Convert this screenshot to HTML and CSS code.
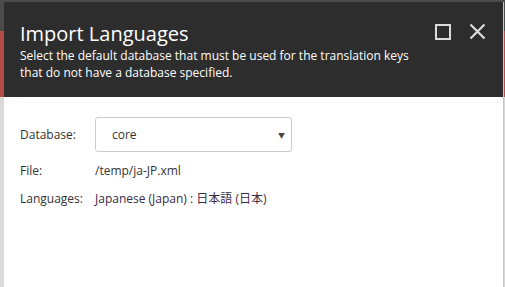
FILE: index.html
```html
<!DOCTYPE html>
<html lang="en">

<head>
    <meta charset="UTF-8">
    <meta name="viewport" content="width=device-width, initial-scale=1.0">
    <title>Import Languages</title>
    <link rel="stylesheet" href="styles.css">
</head>

<body>
    <div class="backdrop">
        <div class="topbar"></div>
        <div class="band"></div>
        <div class="rest"></div>
    </div>

    <div class="dialog">
        <div class="dialog-header">
            <div class="title-row">
                <h1 class="dialog-title">Import Languages</h1>
                <div class="dialog-buttons">
                    <svg class="icon" width="16" height="16" viewBox="0 0 16 16">
                        <rect x="1" y="1" width="14" height="14" fill="none" stroke="#dcdcdc" stroke-width="2" />
                    </svg>
                    <svg class="icon" width="17" height="17" viewBox="0 0 17 17">
                        <path d="M1.5 1.5 L15.5 15.5 M15.5 1.5 L1.5 15.5" stroke="#dcdcdc" stroke-width="2.2" />
                    </svg>
                </div>
            </div>
            <p class="dialog-text">Select the default database that must be used for the translation keys
                that do not have a database specified.</p>
        </div>

        <div class="dialog-body">
            <div class="row">
                <span class="label">Database:</span>
                <div class="select">
                    <span>core</span>
                    <span class="arrow">&#9660;</span>
                </div>
            </div>
            <div class="row">
                <span class="label">File:</span>
                <span class="value">/temp/ja-JP.xml</span>
            </div>
            <div class="row">
                <span class="label">Languages:</span>
                <span class="value lang">Japanese (Japan) : 日本語 (日本)</span>
            </div>
        </div>
    </div>
</body>

</html>
```
FILE: styles.css
```css
body {
    margin: 0;
    font-family: "Open Sans", "Noto Sans CJK JP", sans-serif;
    overflow: hidden;
    height: 287px;
}

.backdrop {
    display: flex;
    flex-direction: column;
    height: 287px;
}

.topbar {
    height: 31px;
    background-color: #4b4b4b;
}

.band {
    height: 66px;
    background-color: #b54a4a;
}

.rest {
    flex: 1;
    background-color: #d9d9d9;
}

.dialog {
    position: absolute;
    left: 4px;
    top: 2px;
    width: 499px;
    height: 290px;
    background-color: white;
    border-right: 1px solid #c8c8c8;
}

.dialog-header {
    background-color: #2d2d2d;
    color: white;
    height: 95px;
    box-sizing: border-box;
    padding: 19px 16px 0 16px;
}

.title-row {
    display: flex;
    justify-content: space-between;
    align-items: center;
}

.dialog-title {
    margin: 0;
    font-weight: normal;
    font-size: 20px;
    line-height: 26px;
}

.dialog-buttons {
    display: flex;
    gap: 18px;
    align-items: center;
    padding-right: 1px;
    margin-top: -5px;
}

.dialog-text {
    margin: 0;
    font-size: 12px;
    line-height: 17px;
    max-width: 400px;
}

.dialog-body {
    padding: 20px 16px;
    font-size: 12px;
    color: #333;
}

.row {
    display: flex;
    align-items: center;
    margin-bottom: 10px;
}

.label {
    width: 75px;
}

.select {
    width: 197px;
    height: 35px;
    box-sizing: border-box;
    border: 1px solid #cccccc;
    border-radius: 3px;
    display: flex;
    align-items: center;
    justify-content: space-between;
    padding: 0 6px 0 16px;
}

.arrow {
    font-size: 7px;
    color: #444;
}

.lang {
    color: #3b2a45;
}
```
